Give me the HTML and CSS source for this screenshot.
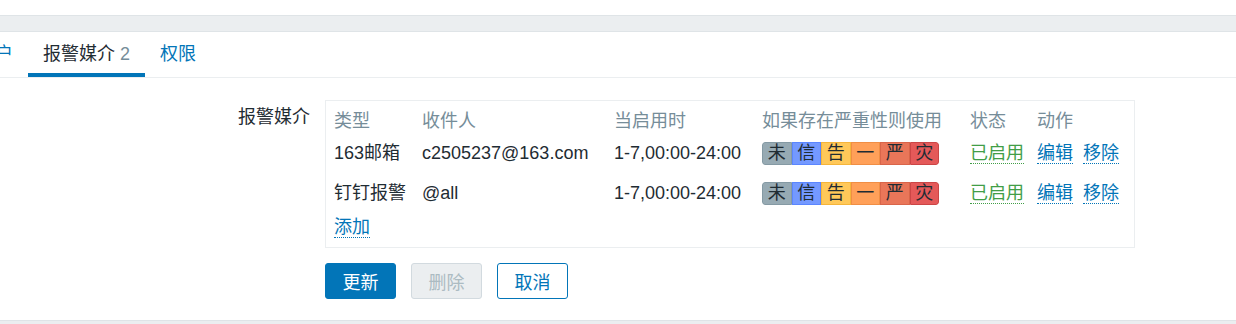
FILE: index.html
```html
<!DOCTYPE html>
<html lang="zh-CN">
<head>
    <meta charset="UTF-8">
    <title>用户 - 报警媒介</title>
    <link rel="stylesheet" href="styles.css">
</head>
<body>
    <div class="top-gap"></div>
    <div class="top-band"></div>

    <ul class="tabs">
        <li><a href="#">用户</a></li>
        <li class="active"><a href="#">报警媒介 <span class="count">2</span></a></li>
        <li><a href="#">权限</a></li>
    </ul>

    <div class="form">
        <div class="form-row">
            <label class="form-label">报警媒介</label>
            <div class="media-box">
                <table class="media-table">
                    <colgroup>
                        <col style="width: 88px">
                        <col style="width: 192px">
                        <col style="width: 148px">
                        <col style="width: 208px">
                        <col style="width: 67px">
                        <col>
                    </colgroup>
                    <thead>
                        <tr>
                            <th>类型</th>
                            <th>收件人</th>
                            <th>当启用时</th>
                            <th>如果存在严重性则使用</th>
                            <th>状态</th>
                            <th>动作</th>
                        </tr>
                    </thead>
                    <tbody>
                        <tr>
                            <td>163邮箱</td>
                            <td>c2505237@163.com</td>
                            <td>1-7,00:00-24:00</td>
                            <td>
                                <div class="severity">
                                    <span class="sev na">未</span><span class="sev info">信</span><span class="sev warn">告</span><span class="sev avg">一</span><span class="sev high">严</span><span class="sev dis">灾</span>
                                </div>
                            </td>
                            <td><a href="#" class="link green">已启用</a></td>
                            <td class="actions"><a href="#" class="link">编辑</a><a href="#" class="link">移除</a></td>
                        </tr>
                        <tr>
                            <td>钉钉报警</td>
                            <td>@all</td>
                            <td>1-7,00:00-24:00</td>
                            <td>
                                <div class="severity">
                                    <span class="sev na">未</span><span class="sev info">信</span><span class="sev warn">告</span><span class="sev avg">一</span><span class="sev high">严</span><span class="sev dis">灾</span>
                                </div>
                            </td>
                            <td><a href="#" class="link green">已启用</a></td>
                            <td class="actions"><a href="#" class="link">编辑</a><a href="#" class="link">移除</a></td>
                        </tr>
                        <tr class="add-row">
                            <td colspan="6"><a href="#" class="link">添加</a></td>
                        </tr>
                    </tbody>
                </table>
            </div>
        </div>

        <div class="buttons">
            <button class="btn primary">更新</button>
            <button class="btn disabled" disabled>删除</button>
            <button class="btn alt">取消</button>
        </div>
    </div>

    <div class="bottom-band"></div>
</body>
</html>
```

FILE: styles.css
```css
:root {
    --text: #1f2c33;
    --muted: #768d99;
    --blue: #0275b8;
    --green: #429e47;
    --line: #dfe4e7;
    --band: #ebeef0;
}

* {
    margin: 0;
    padding: 0;
    box-sizing: border-box;
}

body {
    font-family: "Liberation Sans", "Noto Sans CJK SC", sans-serif;
    font-size: 18px;
    color: var(--text);
    background: #fff;
    overflow: hidden;
}

/* header strip */
.top-gap {
    height: 15px;
}

.top-band {
    height: 17px;
    background: var(--band);
    border-top: 1px solid var(--line);
    border-bottom: 1px solid var(--line);
}

/* tabs */
.tabs {
    list-style: none;
    display: flex;
    margin-left: -38px;
    border-bottom: 1px solid var(--band);
}

.tabs a {
    display: block;
    padding: 12px 15px 9px;
    line-height: 20px;
    color: var(--blue);
    text-decoration: none;
    border-bottom: 4px solid transparent;
}

.tabs .active a {
    color: var(--text);
    border-bottom-color: var(--blue);
}

.tabs .count {
    color: var(--muted);
}

/* form */
.form {
    padding-top: 22px;
}

.form-row {
    display: flex;
    gap: 15px;
}

.form-label {
    width: 310px;
    text-align: right;
    padding-top: 7px;
    line-height: 20px;
}

.media-box {
    width: 810px;
    border: 1px solid var(--band);
    padding: 4px 8px 9px;
}

.media-table {
    border-collapse: collapse;
    table-layout: fixed;
    width: 100%;
}

.media-table th {
    font-weight: normal;
    text-align: left;
    color: var(--muted);
    height: 32px;
    line-height: 32px;
    vertical-align: top;
    white-space: nowrap;
}

.media-table td {
    height: 40px;
    line-height: 32px;
    vertical-align: top;
    white-space: nowrap;
}

.media-table .add-row td {
    height: auto;
    line-height: 18px;
    padding-top: 0;
}

.link {
    color: var(--blue);
    text-decoration: none;
    border-bottom: 1px dotted var(--blue);
    line-height: 20px;
    display: inline-block;
}

.link.green {
    color: var(--green);
    border-bottom-color: var(--green);
}

.actions .link + .link {
    margin-left: 10px;
}

/* severity bar */
.severity {
    display: inline-flex;
    vertical-align: middle;
    margin-top: -1px;
    border-radius: 3px;
    overflow: hidden;
}

.sev {
    width: 29.5px;
    height: 23px;
    line-height: 21px;
    text-align: center;
    font-size: 18px;
    border: 1px solid;
}

.sev.na   { background: #97aab3; border-color: #859aa4; }
.sev.info { background: #7499ff; border-color: #5b86ff; }
.sev.warn { background: #ffc859; border-color: #f5b53b; }
.sev.avg  { background: #ffa059; border-color: #f08e45; }
.sev.high { background: #e97659; border-color: #d9654a; }
.sev.dis  { background: #e45959; border-color: #cc4646; }

.sev:first-child { border-radius: 3px 0 0 3px; }
.sev:last-child { border-radius: 0 3px 3px 0; }

/* buttons */
.buttons {
    display: flex;
    gap: 15px;
    margin: 15px 0 0 325px;
    height: 57px;
}

.btn {
    width: 71px;
    height: 36px;
    font-family: inherit;
    font-size: 18px;
    border-radius: 3px;
    border: 1px solid var(--blue);
    cursor: pointer;
}

.btn.primary {
    background: var(--blue);
    color: #fff;
}

.btn.disabled {
    background: #ebeef0;
    border-color: #d2dadf;
    color: #acbbc2;
    cursor: default;
}

.btn.alt {
    background: #fff;
    color: var(--blue);
}

.bottom-band {
    height: 10px;
    background: var(--band);
    border-top: 1px solid var(--line);
}
```
